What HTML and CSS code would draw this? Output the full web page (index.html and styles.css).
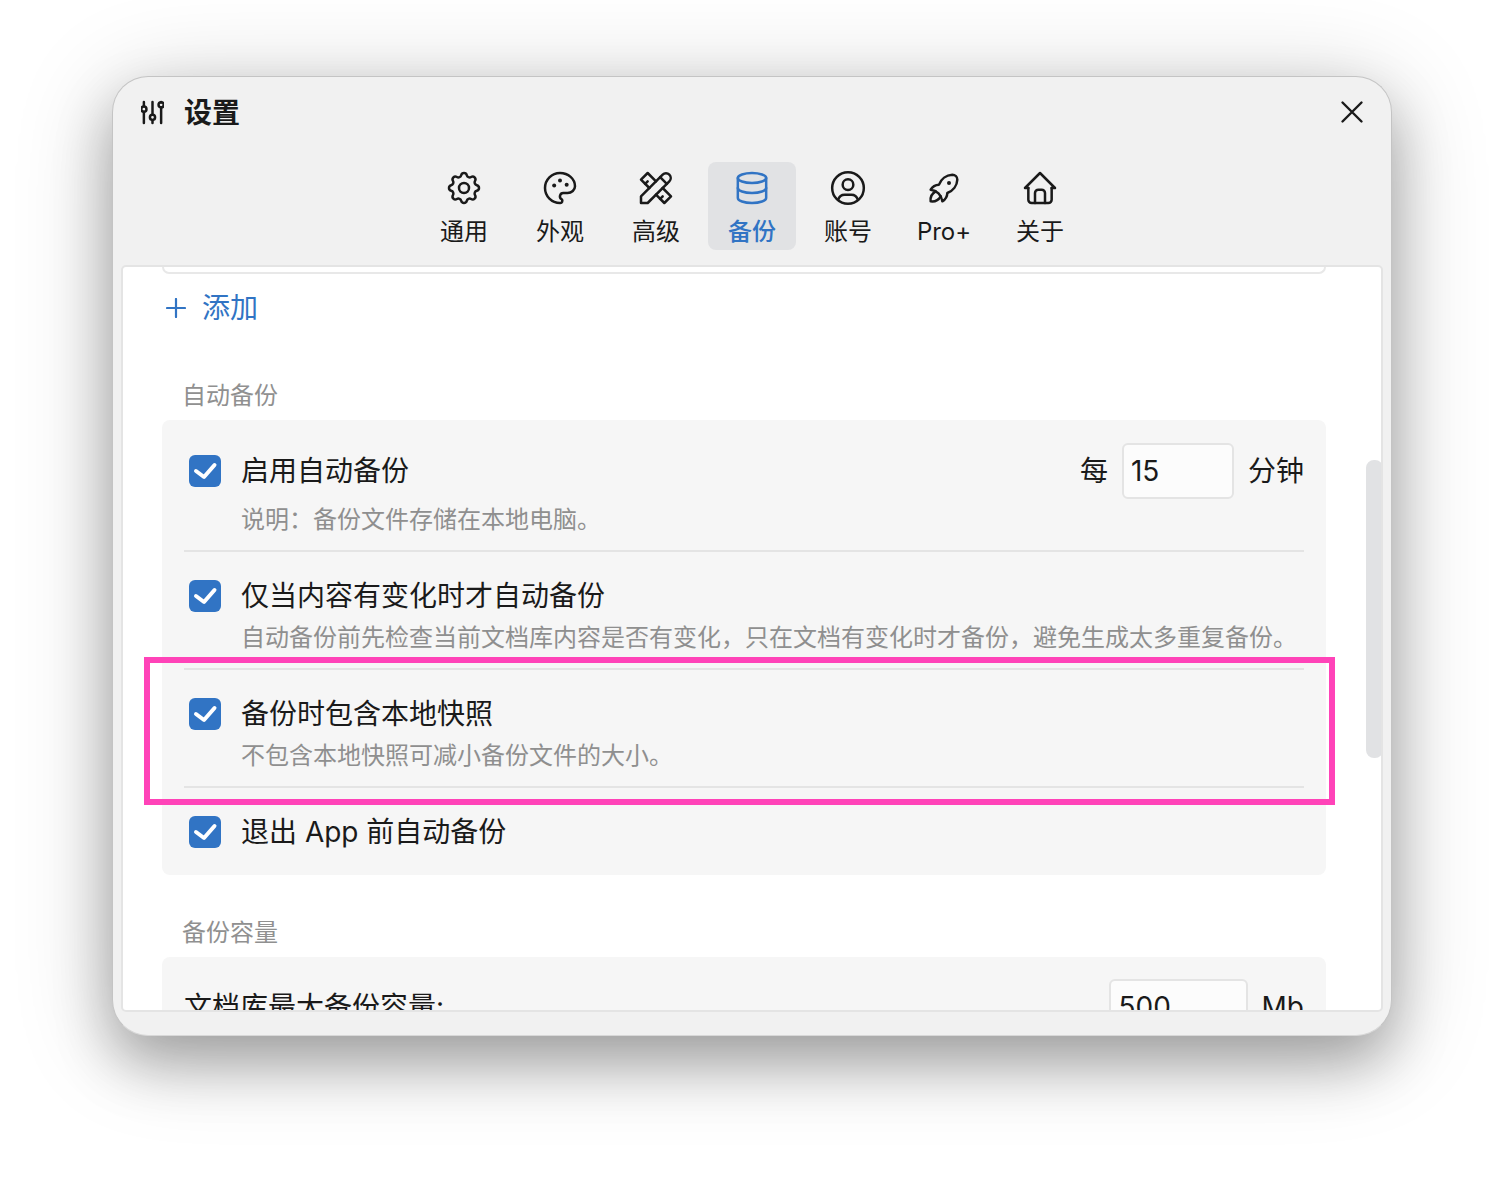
FILE: index.html
```html
<!DOCTYPE html>
<html lang="zh-CN">
<head>
<meta charset="utf-8">
<title>设置</title>
<link rel="stylesheet" href="styles.css">
</head>
<body>
<div class="window">
  <header class="titlebar">
    <div class="title-group">
      <svg class="title-icon" viewBox="0 0 24 26" fill="none" stroke="currentColor" stroke-width="2.600" stroke-linecap="round">
        <path d="M3 2v4.500M3 12.500V24M12 2v13M12 21v3M21 7.500V24M21 2v.5"/>
        <circle cx="3" cy="9.500" r="2.700"/><circle cx="12" cy="18" r="2.700"/><circle cx="21" cy="5" r="2.700"/>
      </svg>
      <h1 class="title">设置</h1>
    </div>
    <svg class="close" viewBox="0 0 24 24" fill="none" stroke="currentColor" stroke-width="2.400" stroke-linecap="round"><path d="M2.500 2.500l19 19M21.500 2.500l-19 19"/></svg>
  </header>
  <nav class="tabs">
    <div class="tab">
      <svg class="tab-icon" viewBox="0 0 24 24"><path d="M10.325 4.317c.426 -1.756 2.924 -1.756 3.35 0a1.724 1.724 0 0 0 2.573 1.066c1.543 -.94 3.31 .826 2.37 2.37a1.724 1.724 0 0 0 1.065 2.572c1.756 .426 1.756 2.924 0 3.35a1.724 1.724 0 0 0 -1.066 2.573c.94 1.543 -.826 3.31 -2.37 2.37a1.724 1.724 0 0 0 -2.572 1.065c-.426 1.756 -2.924 1.756 -3.35 0a1.724 1.724 0 0 0 -2.573 -1.066c-1.543 .94 -3.31 -.826 -2.37 -2.37a1.724 1.724 0 0 0 -1.065 -2.572c-1.756 -.426 -1.756 -2.924 0 -3.35a1.724 1.724 0 0 0 1.066 -2.573c-.94 -1.543 .826 -3.31 2.37 -2.37c1 .608 2.296 .07 2.572 -1.065"/><circle cx="12" cy="12" r="3"/></svg>
      <span>通用</span>
    </div>
    <div class="tab">
      <svg class="tab-icon" viewBox="0 0 24 24"><path d="M12 21a9 9 0 0 1 0 -18c4.970 0 9 3.582 9 8c0 1.060 -.474 2.078 -1.318 2.828c-.844 .75 -1.989 1.172 -3.182 1.172h-2.500a2 2 0 0 0 -1 3.750a1.300 1.300 0 0 1 -1 2.250"/><circle class="dot" cx="8.500" cy="10.500" r="1.200"/><circle class="dot" cx="12" cy="7.500" r="1.200"/><circle class="dot" cx="16" cy="10" r="1.200"/></svg>
      <span>外观</span>
    </div>
    <div class="tab">
      <svg class="tab-icon" viewBox="0 0 24 24"><path d="M3 21h4l13 -13a1.500 1.500 0 0 0 -4 -4l-13 13v4"/><path d="M14.500 5.500l4 4"/><path d="M12 8l-5 -5l-4 4l5 5"/><path d="M7 8l-1.500 1.500"/><path d="M16 12l5 5l-4 4l-5 -5"/><path d="M16 17l-1.500 1.500"/></svg>
      <span>高级</span>
    </div>
    <div class="tab active">
      <svg class="tab-icon" viewBox="0 0 24 24"><ellipse cx="12" cy="6" rx="8.500" ry="3"/><path d="M3.500 6v6a8.500 3 0 0 0 17 0v-6"/><path d="M3.500 12v6a8.500 3 0 0 0 17 0v-6"/></svg>
      <span>备份</span>
    </div>
    <div class="tab">
      <svg class="tab-icon" viewBox="0 0 24 24"><circle cx="12" cy="12" r="9.500"/><circle cx="12" cy="10" r="3.200"/><path d="M6.168 18.849a4 4 0 0 1 3.832 -2.849h4a4 4 0 0 1 3.834 2.855"/></svg>
      <span>账号</span>
    </div>
    <div class="tab">
      <svg class="tab-icon" viewBox="0 0 24 24"><path d="M4 13a8 8 0 0 1 7 7a6 6 0 0 0 3 -5a9 9 0 0 0 6 -8a3 3 0 0 0 -3 -3a9 9 0 0 0 -8 6a6 6 0 0 0 -5 3"/><path d="M7 14a6 6 0 0 0 -3 6a6 6 0 0 0 6 -3"/><circle class="dot" cx="15" cy="9" r="1.200"/></svg>
      <span>Pro+</span>
    </div>
    <div class="tab">
      <svg class="tab-icon" viewBox="0 0 24 24"><path d="M5 12l-2 0l9 -9l9 9l-2 0"/><path d="M5 12v7a2 2 0 0 0 2 2h10a2 2 0 0 0 2 -2v-7"/><path d="M9 21v-6a2 2 0 0 1 2 -2h2a2 2 0 0 1 2 2v6"/></svg>
      <span>关于</span>
    </div>
  </nav>
  <main class="panel">
    <div class="prev-card"></div>
    <div class="add-row">
      <svg class="add-icon" viewBox="0 0 20 20" fill="none" stroke="currentColor" stroke-width="2.200" stroke-linecap="round"><path d="M10 1v18M1 10h18"/></svg>
      <span>添加</span>
    </div>
    <div class="section-label first">自动备份</div>
    <section class="card">
      <div class="row row-first">
        <div class="row-main">
          <svg class="check" viewBox="0 0 32 32"><rect width="32" height="32" rx="6"/><path d="M7 16l8 6 10.500-12"/></svg>
          <span class="row-title">启用自动备份</span>
          <div class="row-trail">
            <span>每</span>
            <input class="num num-short" type="text" value="15" readonly>
            <span>分钟</span>
          </div>
        </div>
        <div class="row-sub sub-first">说明：备份文件存储在本地电脑。</div>
      </div>
      <div class="row">
        <div class="row-main">
          <svg class="check" viewBox="0 0 32 32"><rect width="32" height="32" rx="6"/><path d="M7 16l8 6 10.500-12"/></svg>
          <span class="row-title">仅当内容有变化时才自动备份</span>
        </div>
        <div class="row-sub">自动备份前先检查当前文档库内容是否有变化，只在文档有变化时才备份，避免生成太多重复备份。</div>
      </div>
      <div class="row">
        <div class="row-main">
          <svg class="check" viewBox="0 0 32 32"><rect width="32" height="32" rx="6"/><path d="M7 16l8 6 10.500-12"/></svg>
          <span class="row-title">备份时包含本地快照</span>
        </div>
        <div class="row-sub">不包含本地快照可减小备份文件的大小。</div>
      </div>
      <div class="row row-last">
        <div class="row-main">
          <svg class="check" viewBox="0 0 32 32"><rect width="32" height="32" rx="6"/><path d="M7 16l8 6 10.500-12"/></svg>
          <span class="row-title">退出 App 前自动备份</span>
        </div>
      </div>
    </section>
    <div class="section-label">备份容量</div>
    <section class="card">
      <div class="row-cap">
        <span>文档库最大备份容量:</span>
        <div class="row-trail">
          <input class="num num-long" type="text" value="500" readonly>
          <span>Mb</span>
        </div>
      </div>
    </section>
    <div class="scrollbar"></div>
  </main>
</div>
<div class="highlight"></div>
</body>
</html>
```
FILE: styles.css
```css
* { box-sizing: border-box; }
html, body { height: 100%; }
body {
  margin: 0;
  height: 1184px;
  padding: 76px 112px 0;
  background: #fff;
  overflow: hidden;
  position: relative;
  font-family: Inter, "Noto Sans CJK SC", sans-serif;
  color: #1a1a1a;
}
.window {
  width: 1280px;
  height: 960px;
  background: #f1f1f1;
  border: 1px solid #c4c4c4;
  border-bottom-color: #d8d8d8;
  border-radius: 36px;
  box-shadow: 0 28px 56px rgba(0, 0, 0, .28), 0 12px 100px rgba(0, 0, 0, .2);
  display: flex;
  flex-direction: column;
  padding: 0 8px 23px;
}
.titlebar {
  height: 70px;
  flex: none;
  display: flex;
  align-items: center;
  justify-content: space-between;
  padding: 0 19px 0 20px;
}
.title-group { display: flex; align-items: center; gap: 20px; }
.title-icon { width: 23px; height: 25px; color: #1a1a1a; }
.title { margin: 2px 0 0; font-size: 28px; font-weight: 700; line-height: 34px; }
.close { width: 24px; height: 24px; color: #1a1a1a; }
.tabs {
  flex: none;
  margin-top: 15px;
  display: flex;
  justify-content: center;
  gap: 8px;
  height: 88px;
}
.tab {
  width: 88px;
  border-radius: 8px;
  display: flex;
  flex-direction: column;
  align-items: center;
  padding-top: 6px;
  font-size: 24px;
  line-height: 34px;
  gap: 7px;
  white-space: nowrap;
}
.tab.active { background: #e1e2e4; color: #3174c4; font-weight: 500; }
.tab-icon {
  width: 40px;
  height: 40px;
  flex: none;
  fill: none;
  stroke: currentColor;
  stroke-width: 1.500;
  stroke-linecap: round;
  stroke-linejoin: round;
}
.tab-icon .dot { fill: currentColor; stroke: none; }
.panel {
  flex: 1;
  min-height: 0;
  margin-top: 15px;
  background: #fff;
  border: 2px solid #e4e4e4;
  border-radius: 5px;
  overflow: hidden;
  position: relative;
  padding: 0 55px 0 39px;
}
.prev-card {
  height: 7px;
  border: 2px solid #e8e8e8;
  border-top: 0;
  border-radius: 0 0 8px 8px;
}
.add-row {
  margin-top: 17px;
  display: flex;
  align-items: center;
  gap: 16px;
  padding-left: 4px;
  height: 34px;
  font-size: 28px;
  line-height: 34px;
  color: #3174c4;
}
.add-icon { width: 20px; height: 20px; }
.section-label {
  margin: 41px 0 7px 20px;
  font-size: 24px;
  line-height: 34px;
  color: #909090;
}
.section-label.first { margin-top: 54px; }
.card {
  background: #f6f6f6;
  border-radius: 8px;
  padding: 0 22px;
}
.row {
  height: 118px;
  padding-top: 27px;
  border-bottom: 2px solid #e4e4e4;
}
.row-first { height: 132px; padding-top: 23px; }
.row-last { height: 87px; border-bottom: 0; }
.row-main {
  display: flex;
  align-items: center;
  gap: 20px;
  padding-left: 5px;
}
.check {
  width: 32px;
  height: 32px;
  flex: none;
  margin-top: -1px;
  fill: #3174c4;
}
.check path {
  fill: none;
  stroke: #fff;
  stroke-width: 4;
  stroke-linecap: round;
  stroke-linejoin: round;
}
.row-title { font-size: 28px; line-height: 34px; }
.row-trail {
  margin-left: auto;
  display: flex;
  align-items: center;
  gap: 14px;
  font-size: 28px;
  line-height: 34px;
}
.num {
  height: 56px;
  padding: 0 0 0 7px;
  background: #fcfcfc;
  border: 2px solid #e4e4e4;
  border-radius: 6px;
  font: inherit;
  color: #1a1a1a;
  outline: 0;
}
.num-short { width: 112px; }
.num-long { width: 139px; padding-left: 8px; }
.row-sub {
  margin: 8px 0 0 57px;
  font-size: 24px;
  line-height: 34px;
  color: #8f8f8f;
  white-space: nowrap;
}
.sub-first { margin-top: 4px; }
.row-cap {
  padding-top: 22px;
  display: flex;
  align-items: center;
  font-size: 28px;
  line-height: 34px;
}
.scrollbar {
  position: absolute;
  left: 1243px;
  top: 193px;
  width: 17px;
  height: 298px;
  border-radius: 8px;
  background: #e1e2e4;
}
.highlight {
  position: absolute;
  left: 144px;
  top: 657px;
  width: 1191px;
  height: 148px;
  border: 6px solid #ff43b8;
  pointer-events: none;
}
```
